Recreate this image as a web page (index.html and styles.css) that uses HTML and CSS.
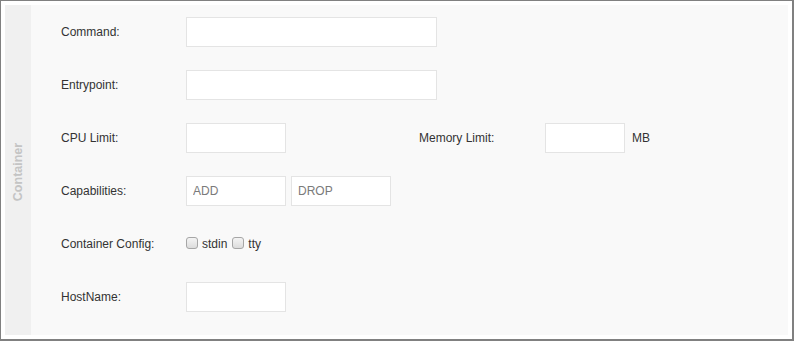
FILE: index.html
```html
<!DOCTYPE html>
<html lang="en">
<head>
    <meta charset="UTF-8">
    <title>Container Settings</title>
    <link rel="stylesheet" href="styles.css">
</head>
<body>
    <div class="frame">
        <div class="panel">
            <div class="side-tab"><span>Container</span></div>

            <form class="form">
                <div class="row">
                    <label class="label" for="command">Command:</label>
                    <input class="input input-wide" type="text" id="command">
                </div>

                <div class="row">
                    <label class="label" for="entrypoint">Entrypoint:</label>
                    <input class="input input-wide" type="text" id="entrypoint">
                </div>

                <div class="row">
                    <div class="half">
                        <label class="label" for="cpu">CPU Limit:</label>
                        <input class="input" type="text" id="cpu">
                    </div>
                    <label class="label label-mem" for="memory">Memory Limit:</label>
                    <input class="input input-small" type="text" id="memory">
                    <span class="unit">MB</span>
                </div>

                <div class="row">
                    <label class="label">Capabilities:</label>
                    <input class="input" type="text" placeholder="ADD">
                    <input class="input spaced" type="text" placeholder="DROP">
                </div>

                <div class="row">
                    <label class="label">Container Config:</label>
                    <label class="check"><input type="checkbox"> stdin</label>
                    <label class="check"><input type="checkbox"> tty</label>
                </div>

                <div class="row">
                    <label class="label" for="hostname">HostName:</label>
                    <input class="input" type="text" id="hostname">
                </div>
            </form>
        </div>
    </div>
</body>
</html>
```

FILE: styles.css
```css
html, body {
    margin: 0;
    padding: 0;
}

body {
    font-family: 'Liberation Sans', Arial, sans-serif;
    font-size: 12px;
    color: #333;
    background: #fff;
}

.frame {
    box-sizing: border-box;
    width: 794px;
    height: 341px;
    border: solid #808080;
    border-width: 1px 2px 2px 1px;
    padding: 4px;
    background: #fff;
}

.panel {
    display: flex;
    height: 100%;
    background: #f9f9f9;
}

/* Vertical tab on the left */
.side-tab {
    width: 26px;
    flex: none;
    background: #f0f0f0;
    display: flex;
    align-items: center;
    justify-content: center;
}

.side-tab span {
    transform: rotate(-90deg);
    font-weight: bold;
    font-size: 12.5px;
    color: #c4c4c4;
    white-space: nowrap;
    margin-top: 4px;
}

/* Form rows */
.form {
    flex: 1;
    display: flex;
    flex-direction: column;
    gap: 23px;
    padding: 12px 0 0 30px;
}

.row {
    display: flex;
    align-items: center;
    height: 30px;
}

.half {
    display: flex;
    align-items: center;
    width: 358px;
}

.label {
    width: 125px;
    flex: none;
}

.label-mem {
    width: 126px;
}

.input {
    box-sizing: border-box;
    width: 100px;
    height: 30px;
    border: 1px solid #e4e4e4;
    background: #fff;
    padding: 0 6px;
    font-family: inherit;
    font-size: 12px;
    color: #333;
    outline: none;
}

.input::placeholder {
    color: #7a7a7a;
}

.input-wide {
    width: 251px;
}

.input-small {
    width: 80px;
}

.spaced {
    margin-left: 5px;
}

.unit {
    margin-left: 7px;
}

.check {
    display: flex;
    align-items: center;
    gap: 4px;
    margin-right: 5px;
}

.check input {
    appearance: none;
    -webkit-appearance: none;
    box-sizing: border-box;
    margin: 0 0 2px 0;
    width: 12px;
    height: 12px;
    border: 1px solid #a6a6a6;
    border-radius: 3px;
    background: linear-gradient(#f4f4f4, #dcdcdc);
}
```
